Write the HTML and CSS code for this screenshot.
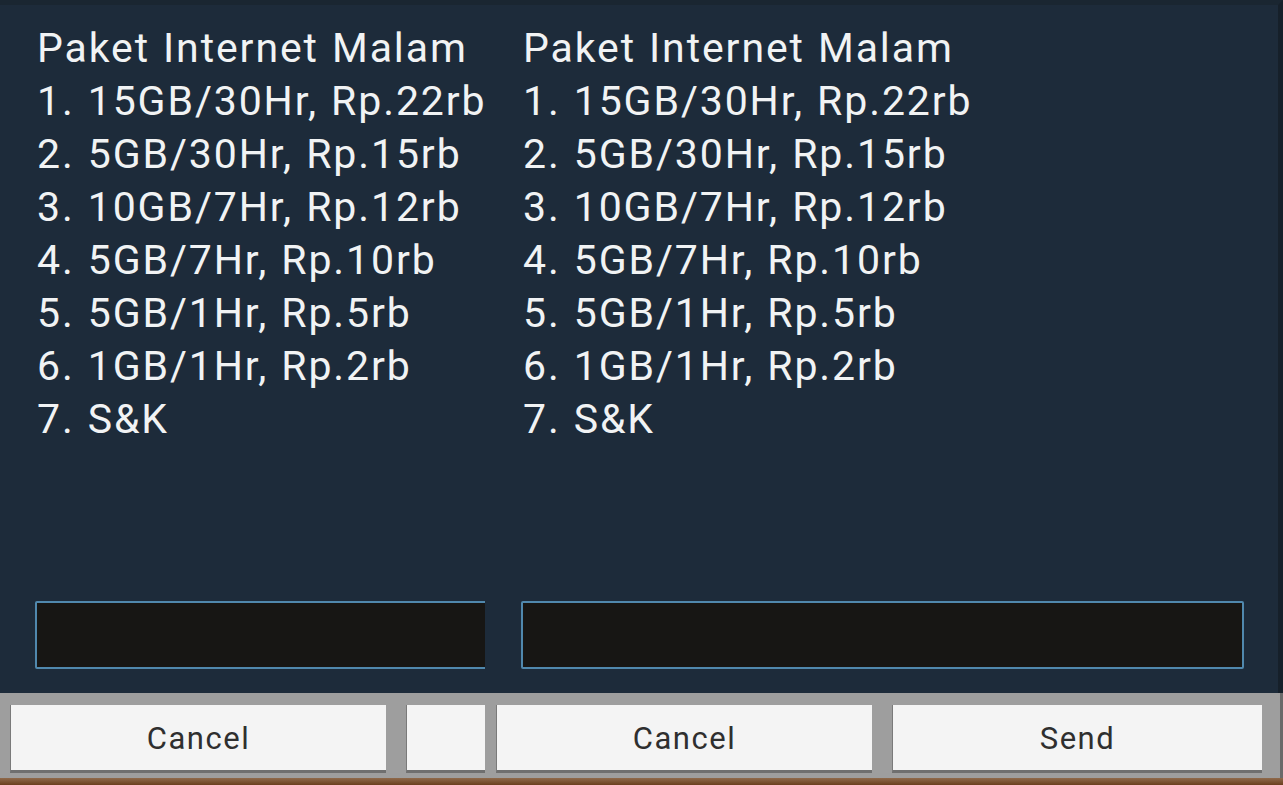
FILE: index.html
```html
<!DOCTYPE html>
<html lang="id">
<head>
<meta charset="utf-8">
<title>Paket Internet Malam</title>
<link rel="stylesheet" href="styles.css">
</head>
<body>
<div class="screen">
  <div class="pane pane-left">
    <div class="dialog">
      <div class="body">
        <div class="message">
          <div>Paket Internet Malam</div>
          <div>1. 15GB/30Hr, Rp.22rb</div>
          <div>2. 5GB/30Hr, Rp.15rb</div>
          <div>3. 10GB/7Hr, Rp.12rb</div>
          <div>4. 5GB/7Hr, Rp.10rb</div>
          <div>5. 5GB/1Hr, Rp.5rb</div>
          <div>6. 1GB/1Hr, Rp.2rb</div>
          <div>7. S&amp;K</div>
        </div>
        <div class="input"></div>
      </div>
      <div class="buttons">
        <div class="btn btn-cancel">Cancel</div>
        <div class="btn btn-send"></div>
      </div>
    </div>
  </div>
  <div class="pane pane-right">
    <div class="dialog">
      <div class="body">
        <div class="message">
          <div>Paket Internet Malam</div>
          <div>1. 15GB/30Hr, Rp.22rb</div>
          <div>2. 5GB/30Hr, Rp.15rb</div>
          <div>3. 10GB/7Hr, Rp.12rb</div>
          <div>4. 5GB/7Hr, Rp.10rb</div>
          <div>5. 5GB/1Hr, Rp.5rb</div>
          <div>6. 1GB/1Hr, Rp.2rb</div>
          <div>7. S&amp;K</div>
        </div>
        <div class="input"></div>
      </div>
      <div class="buttons">
        <div class="btn btn-cancel">Cancel</div>
        <div class="btn btn-send">Send</div>
      </div>
    </div>
  </div>
</div>
<div class="strip"></div>
</body>
</html>
```

FILE: styles.css
```css
html, body {
  margin: 0;
  padding: 0;
  background: #1d2b3a;
  overflow: hidden;
}
body {
  width: 1283px;
  height: 785px;
  font-family: Roboto, "Liberation Sans", sans-serif;
}
.screen {
  display: flex;
  height: 778px;
}
.pane {
  height: 778px;
  overflow: hidden;
  flex: none;
}
.pane-left {
  width: 485px;
}
.pane-right {
  width: 798px;
}
.pane-left .dialog {
  margin-left: -1px;
}
.dialog {
  width: 798px;
  height: 778px;
  display: flex;
  flex-direction: column;
}
.body {
  height: 693px;
  box-sizing: border-box;
  background: #1d2b3a;
  border-top: 5px solid #1a2631;
  border-right: 5px solid #16202a;
  display: flex;
  flex-direction: column;
  padding-top: 17px;
}
.message {
  padding-left: 38px;
  color: #f1f3f4;
  font-size: 41px;
  line-height: 53px;
  white-space: nowrap;
  letter-spacing: 1.9px;
  word-spacing: 1px;
}
.input {
  margin-top: auto;
  margin-bottom: 24px;
  margin-left: 36px;
  width: 723px;
  height: 68px;
  box-sizing: border-box;
  border: 2px solid #5088ad;
  border-radius: 2px;
  background: #171614;
}
.buttons {
  height: 85px;
  box-sizing: border-box;
  background: #9e9e9e;
  border-right: 3px solid #6a6a6a;
  padding: 12px 0 0 11px;
  display: grid;
  grid-template-columns: 376px 370px;
  grid-template-rows: 68px;
  column-gap: 20px;
}
.btn {
  background: #f4f4f4;
  box-sizing: border-box;
  border-bottom: 3px solid #6f6f6f;
  border-left: 1px solid #7a7a7a;
  display: flex;
  align-items: center;
  justify-content: center;
  color: #2f2f2f;
  font-size: 31px;
  letter-spacing: 1.5px;
  padding-top: 2px;
}
.strip {
  height: 7px;
  background: linear-gradient(#8f6a4c, #6b3f1e);
}
```
